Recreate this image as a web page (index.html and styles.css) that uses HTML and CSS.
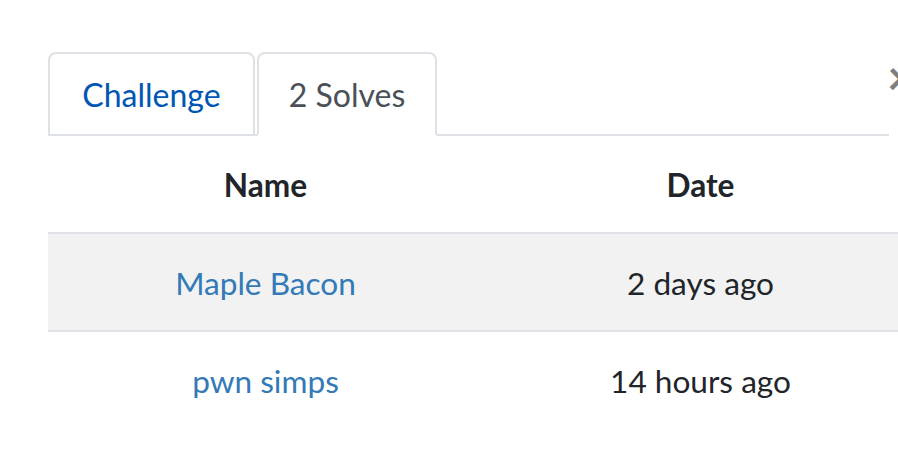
FILE: index.html
```html
<!DOCTYPE html>
<html>
<head>
<meta charset="utf-8">
<link rel="stylesheet" href="styles.css">
</head>
<body>
<div class="modal">
  <button class="close" type="button">&times;</button>
  <ul class="tabs">
    <li class="tab tab-challenge"><a class="tab-link" href="#">Challenge</a></li>
    <li class="tab tab-solves active"><a class="tab-link" href="#">2 Solves</a></li>
  </ul>
  <table class="solves">
    <thead>
      <tr><th>Name</th><th>Date</th></tr>
    </thead>
    <tbody>
      <tr class="hl"><td><a href="#">Maple Bacon</a></td><td>2 days ago</td></tr>
      <tr><td><a href="#">pwn simps</a></td><td>14 hours ago</td></tr>
    </tbody>
  </table>
</div>
</body>
</html>
```

FILE: styles.css
```css
html, body {
  margin: 0;
  padding: 0;
  overflow: hidden;
  background: #fff;
}
body {
  font-family: Lato, "Open Sans", sans-serif;
  font-size: 31.6px;
  line-height: 48px;
  color: #212529;
}
.modal {
  position: relative;
  width: 898px;
  height: 460px;
  padding: 52px 0 0 48px;
  box-sizing: border-box;
}
.close {
  position: absolute;
  left: 887px;
  top: 53px;
  margin: 0;
  padding: 0;
  border: 0;
  background: none;
  font-family: Lato, sans-serif;
  font-size: 48px;
  font-weight: 700;
  line-height: 48px;
  color: #000;
  opacity: 0.5;
}
.tabs {
  display: flex;
  gap: 2px;
  list-style: none;
  margin: 0;
  padding: 0;
  width: 841px;
  border-bottom: 2px solid #dee2e6;
}
.tab {
  margin-bottom: -2px;
}
.tab-challenge {
  width: 207px;
}
.tab-solves {
  width: 180px;
}
.tab-link {
  display: block;
  padding: 17px 0 15px;
  text-align: center;
  font-size: 32px;
  border: 2px solid #dee2e6;
  border-radius: 8px 8px 0 0;
  color: #0056b3;
  text-decoration: none;
}
.tab.active .tab-link {
  color: #495057;
  background: #fff;
  border-bottom-color: #fff;
}
.solves {
  width: 870px;
  border-collapse: collapse;
  table-layout: fixed;
}
.solves th, .solves td {
  padding: 25px 24px 23px;
  text-align: center;
  font-size: 31.6px;
  line-height: 48px;
}
.solves th {
  font-weight: 700;
  border-bottom: 2px solid #dee2e6;
}
.solves tr.hl td {
  background: #f2f2f2;
  border-bottom: 2px solid #dee2e6;
}
.solves a {
  color: #337ab7;
  text-decoration: none;
}
```
